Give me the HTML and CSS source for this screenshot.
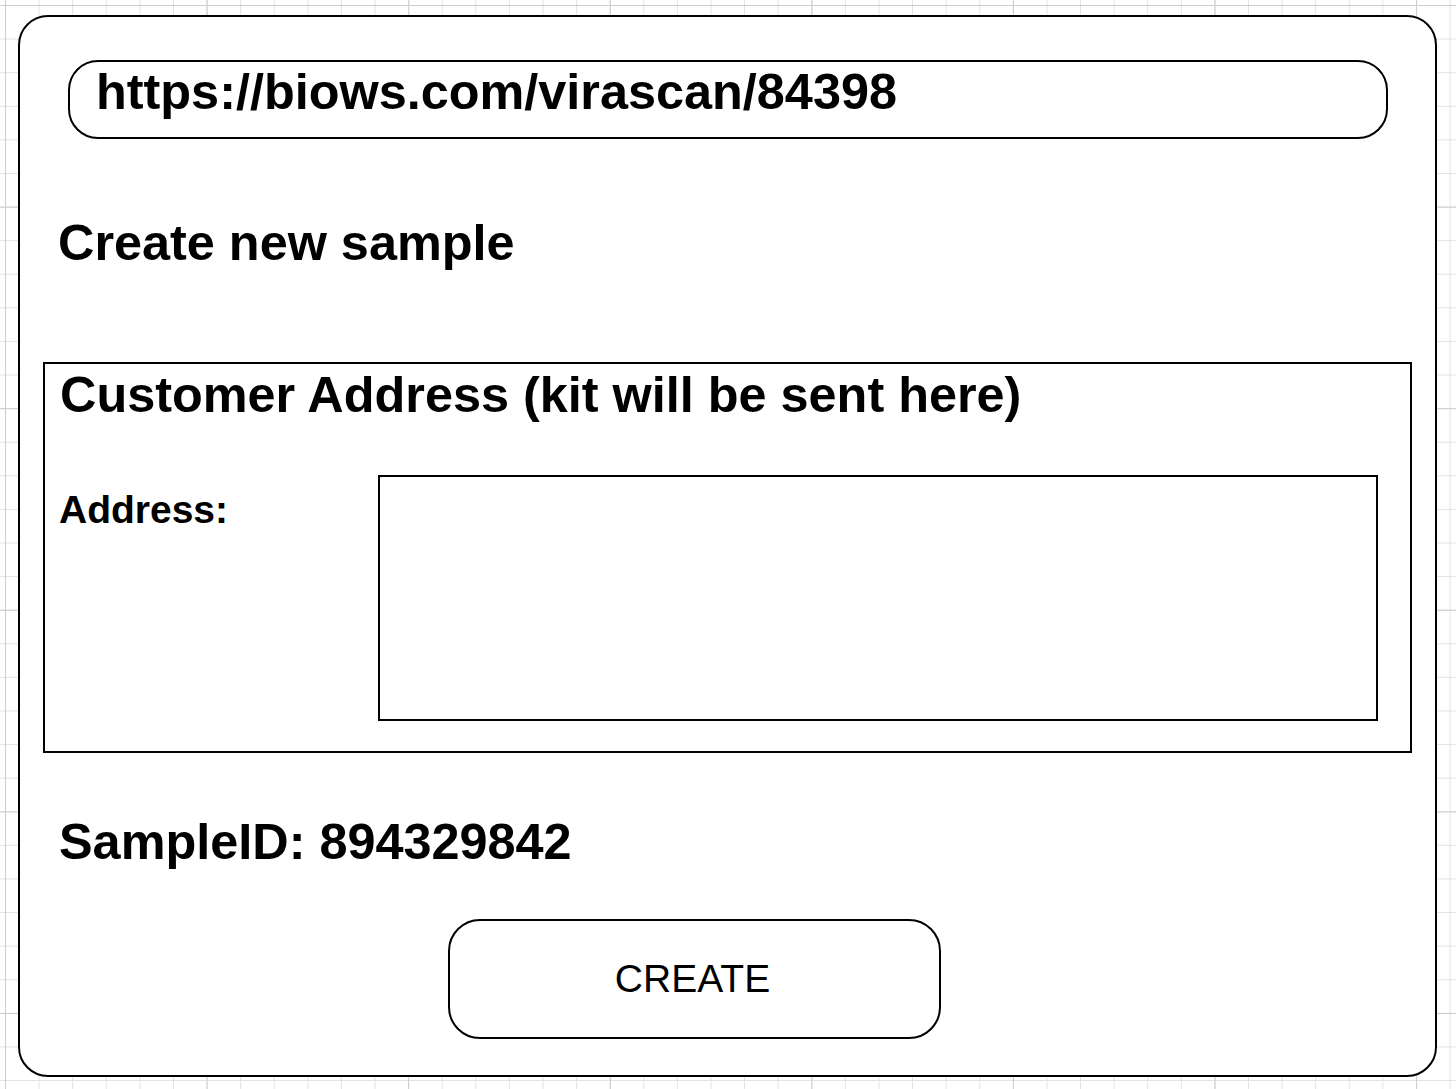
FILE: index.html
```html
<!DOCTYPE html>
<html lang="en">
<head>
    <meta charset="UTF-8">
    <meta name="viewport" content="width=device-width, initial-scale=1.0">
    <title>Create new sample</title>
    <link rel="stylesheet" href="styles.css">
</head>
<body>
    <!-- Browser window mockup -->
    <div class="card">
        <div class="url-bar">https://biows.com/virascan/84398</div>

        <h1 class="title">Create new sample</h1>

        <!-- Customer address -->
        <div class="section">
            <h2 class="section-title">Customer Address (kit will be sent here)</h2>
            <div class="field-row">
                <label class="field-label" for="address">Address:</label>
                <textarea id="address" class="field-input"></textarea>
            </div>
        </div>

        <div class="sample-id">SampleID: 894329842</div>

        <button class="create-btn">CREATE</button>
    </div>
</body>
</html>
```

FILE: styles.css
```css
html, body { margin: 0; padding: 0; min-height: 100%; }
body {
    background-color: #fff;
    background-image:
        linear-gradient(to right, #cdcdcd 1px, transparent 1px),
        linear-gradient(to bottom, #cdcdcd 1px, transparent 1px),
        linear-gradient(to right, #e3e3e3 1px, transparent 1px),
        linear-gradient(to bottom, #e3e3e3 1px, transparent 1px);
    background-size: 201.6px 201.6px, 201.6px 201.6px, 33.6px 33.6px, 33.6px 33.6px;
    background-position: 5px 5px;
    font-family: "Liberation Sans", Arial, sans-serif;
    color: #000;
    overflow: hidden;
}

.card {
    box-sizing: border-box;
    width: 1419px; height: 1062px;
    margin: 15px 0 0 18px;
    padding-top: 43px;
    background: #fff;
    border: 2px solid #000;
    border-radius: 30px;
}

.url-bar {
    box-sizing: border-box;
    height: 79px;
    margin: 0 47px 0 48px;
    padding: 2px 0 0 26px;
    border: 2px solid #000;
    border-radius: 30px;
    font-size: 50.4px; font-weight: bold; line-height: 55px;
}

.title, .section-title, .sample-id {
    margin: 0;
    font-size: 50.4px; font-weight: bold; line-height: 57.5px;
}
.title { margin: 75px 0 0 38px; }
.sample-id { margin: 60.5px 0 0 39px; }

.section {
    margin: 90.5px 23px 0 23px;
    padding: 2px 32px 30px 13px;
    border: 2px solid #000;
}
.section-title { padding-left: 2px; }

.field-row { display: flex; margin-top: 51px; }
.field-label {
    width: 320px; flex-shrink: 0;
    box-sizing: border-box;
    padding: 13px 0 0 1px;
    font-size: 39px; font-weight: bold; line-height: 1.15;
}
.field-input {
    flex: 1;
    box-sizing: border-box;
    height: 246px;
    margin: 0; padding: 0;
    border: 2px solid #000; border-radius: 0;
    resize: none; outline: none;
    font-family: inherit;
}

.create-btn {
    display: block;
    box-sizing: border-box;
    width: 493px; height: 120px;
    margin: 48.5px 0 0 428px;
    padding: 0 4px 0 0;
    background: #fff; color: #000;
    border: 2px solid #000; border-radius: 32px;
    font-family: "Liberation Sans", Arial, sans-serif;
    font-size: 39px; font-weight: normal;
    cursor: pointer;
}
```
